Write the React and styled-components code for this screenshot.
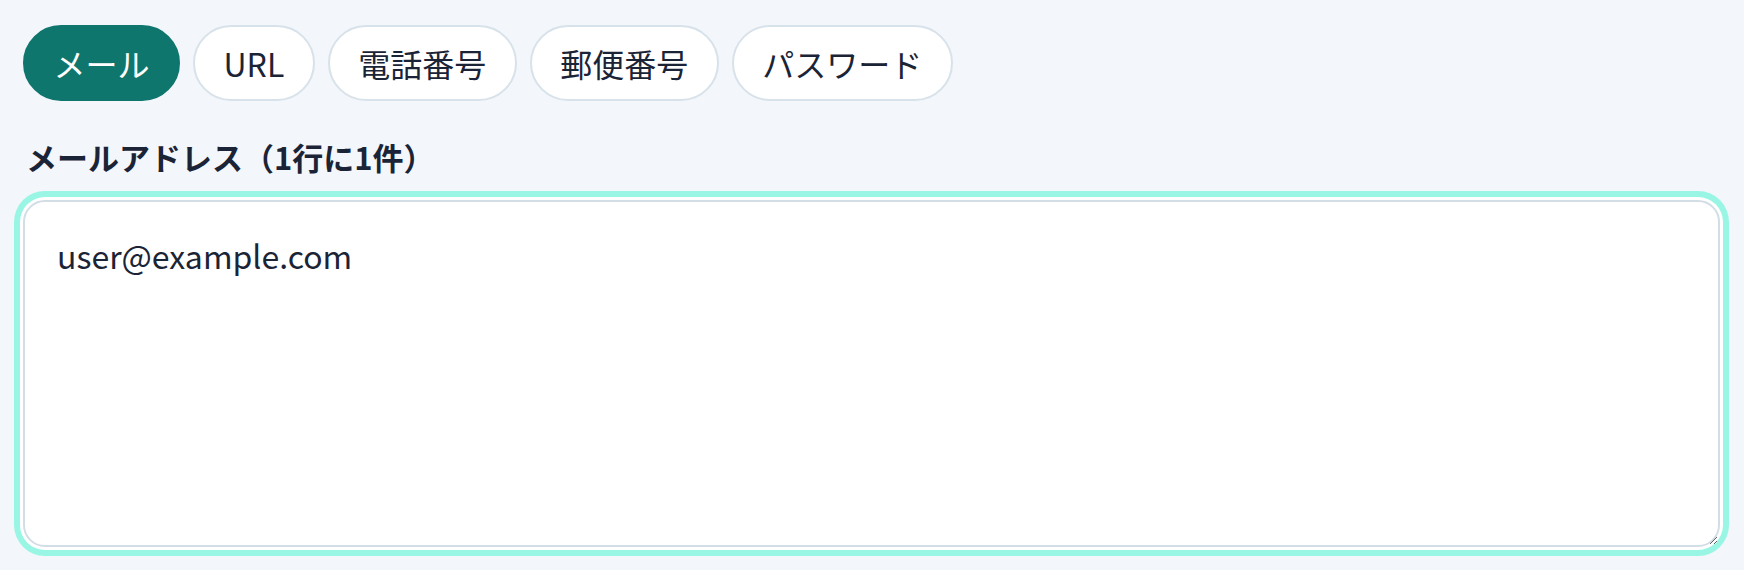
import React, { useState } from "react";
import styled, { createGlobalStyle } from "styled-components";

const Global = createGlobalStyle`
  html, body {
    margin: 0;
    padding: 0;
    background: #f3f6fa;
    font-family: "Noto Sans CJK JP", "Noto Sans", sans-serif;
    color: #1b2436;
  }
  * { box-sizing: border-box; }
`;

const Page = styled.div`
  min-height: 570px;
  padding: 25px 24px 22px 23px;
`;

const TabRow = styled.div`
  display: flex;
  gap: 13px;
`;

const Pill = styled.button`
  height: 76px;
  padding: 0 28.5px;
  border-radius: 999px;
  border: 2px solid ${(p) => (p.$active ? "#0f766e" : "#d8e2ea")};
  background: ${(p) => (p.$active ? "#0f766e" : "#ffffff")};
  color: ${(p) => (p.$active ? "#ffffff" : "#1b2436")};
  font-family: "Noto Sans CJK JP", sans-serif;
  font-size: 32px;
  line-height: 48px;
  cursor: pointer;
  display: flex;
  align-items: center;
`;

const Label = styled.label`
  display: block;
  margin: 35px 0 22px 3px;
  font-size: 31px;
  line-height: 42px;
  font-weight: 700;
  color: #1b2436;
`;

const Area = styled.textarea`
  display: block;
  width: 1697px;
  height: 347px;
  padding: 29px 32px;
  border: 2px solid #d3dde6;
  border-radius: 22px;
  background: #ffffff;
  box-shadow: 0 0 0 3px #ffffff, 0 0 0 9px #99f6e4;
  outline: none;
  resize: vertical;
  font-family: "Noto Sans CJK JP", sans-serif;
  font-size: 32px;
  line-height: 48px;
  color: #1b2436;
`;

const tabs = ["メール", "URL", "電話番号", "郵便番号", "パスワード"];

export default function App() {
  const [active, setActive] = useState(0);
  const [value, setValue] = useState("user@example.com");
  return (
    <Page>
      <Global />
      <TabRow>
        {tabs.map((t, i) => (
          <Pill key={t} $active={i === active} onClick={() => setActive(i)}>
            {t}
          </Pill>
        ))}
      </TabRow>
      <Label htmlFor="input">メールアドレス（1行に1件）</Label>
      <Area id="input" value={value} onChange={(e) => setValue(e.target.value)} />
    </Page>
  );
}
